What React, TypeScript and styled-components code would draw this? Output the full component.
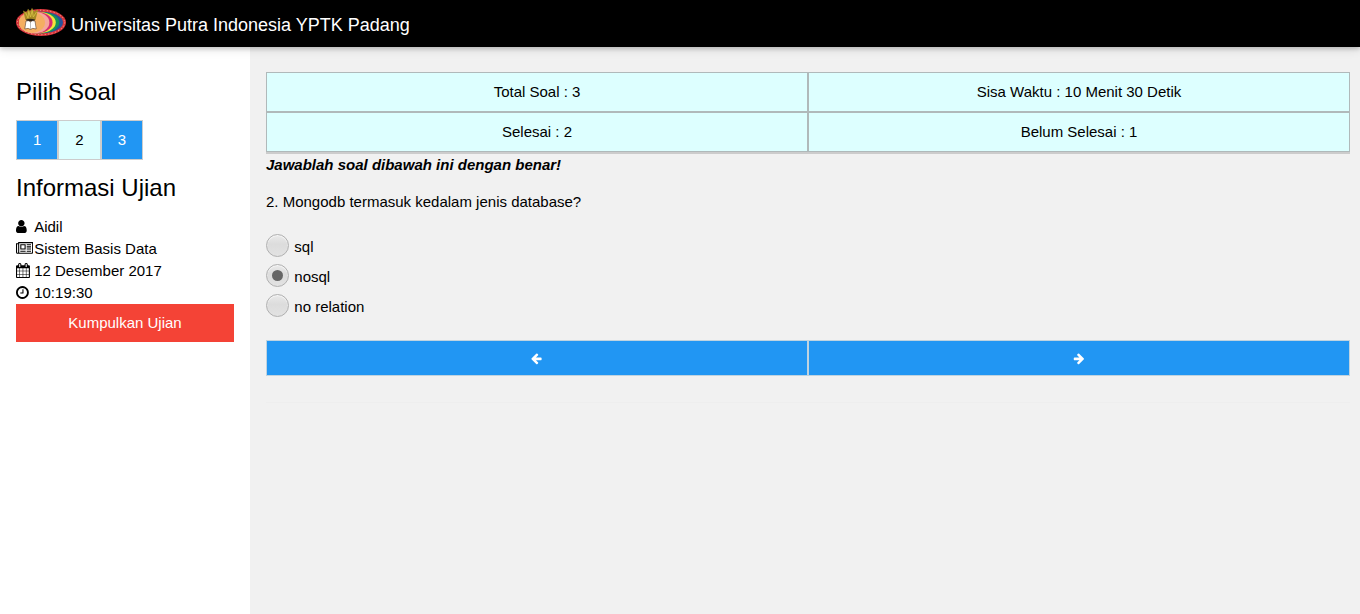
import React from 'react';
import styled, { createGlobalStyle, css } from 'styled-components';

const GlobalStyle = createGlobalStyle`
  *, *::before, *::after { box-sizing: border-box; }
  body {
    margin: 0;
    background: #f1f1f1;
    color: #000;
    font: 15px/22px "Liberation Sans", Arial, sans-serif;
  }
  #root { min-height: 100vh; }
`;

const Page = styled.div`
  display: flex;
  flex-direction: column;
  height: 100vh;
  overflow: hidden;
`;

const Header = styled.header`
  display: flex;
  flex: none;
  height: 47px;
  padding: 0 16px;
  background: #000;
  color: #fff;
  box-shadow: 0 2px 4px rgba(0, 0, 0, 0.16), 0 2px 10px rgba(0, 0, 0, 0.12);
  z-index: 1;
`;

const LogoImage = styled.svg`
  width: 50px;
  height: 30px;
  margin: 7px 5px 0 0;
`;

const Title = styled.span`
  font-size: 18px;
  line-height: 27px;
  padding-top: 12px;
`;

const Body = styled.div`
  display: flex;
  flex: 1;
`;

const Sidebar = styled.aside`
  width: 250px;
  flex: none;
  padding: 27px 16px;
  background: #fff;
`;

const Heading = styled.h3`
  margin: 0 0 10px;
  font-size: 24px;
  line-height: 36px;
  font-weight: 400;
`;

const QuestionPicker = styled.div`
  display: flex;
  margin-bottom: 10px;
`;

const filled = css`
  background: #2196f3;
  color: #fff;
`;

const QuestionButton = styled.button<{ $current?: boolean }>`
  width: 42.34px;
  height: 40px;
  padding: 0;
  border: 1px solid #ccc;
  font: inherit;
  ${(p) => (p.$current ? css`background: #ddffff; color: #000;` : filled)}
`;

const InfoRow = styled.div`
  display: flex;
  height: 22px;
`;

const InfoIcon = styled.svg`
  height: 15px;
  flex: none;
  margin-top: 3px;
  fill: currentColor;
`;

const IconSlot = styled.span`
  display: flex;
  width: 18.2px;
`;

const SubmitButton = styled.button`
  display: block;
  width: 100%;
  height: 38px;
  border: 0;
  padding: 0;
  background: #f44336;
  color: #fff;
  font: inherit;
`;

const Content = styled.main`
  flex: 1;
  padding: 25px 10px 0 16px;
`;

const StatusGrid = styled.div`
  display: grid;
  grid-template-columns: 1fr 1fr;
  border-bottom: 2px solid #ccc;
`;

const StatusCell = styled.div`
  height: 40px;
  padding-top: 8px;
  border: 1px solid #b0b9ba;
  background: #ddffff;
  text-align: center;
`;

const Instruction = styled.div`
  font-weight: 700;
  font-style: italic;
`;

const Question = styled.p`
  margin: 15px 0 20px;
`;

const Option = styled.label`
  display: flex;
  height: 30px;
  gap: 5.3px;
`;

const Radio = styled.span<{ $checked?: boolean }>`
  display: flex;
  align-items: center;
  justify-content: center;
  width: 23px;
  height: 23px;
  margin-top: 1px;
  border: 1px solid #b0b0b0;
  border-radius: 50%;
  background: linear-gradient(#e9e9e9, #dcdcdc 45%, #e2e2e2);
  box-shadow: inset 0 1px 1px #f7f7f7;
  ${(p) =>
    p.$checked &&
    css`
      &::after {
        content: '';
        width: 11px;
        height: 11px;
        border-radius: 50%;
        background: #666;
      }
    `}
`;

const OptionText = styled.span`
  padding-top: 3px;
`;

const NavRow = styled.nav`
  display: grid;
  grid-template-columns: 1fr 1fr;
  margin-top: 17px;
`;

const NavButton = styled.button`
  display: flex;
  align-items: center;
  justify-content: center;
  height: 36px;
  padding: 0;
  border: 1px solid #bfd3e0;
  ${filled}
`;

const ArrowIcon = styled.svg<{ $shift: number }>`
  width: 12.4px;
  height: 13px;
  margin-left: ${(p) => p.$shift}px;
  fill: currentColor;
`;

const Divider = styled.hr`
  margin: 26px 0 0;
  border: 0;
  border-top: 1px solid #eee;
`;

const userPath =
  'M1536 1399q0 109-62.5 187t-150.5 78h-854q-88 0-150.5-78t-62.5-187q0-85 8.5-160.5t31.5-152 58.5-131 94-89 134.5-34.5q131 128 313 128t313-128q76 0 134.5 34.5t94 89 58.5 131 31.5 152 8.5 160.5zm-256-887q0 159-112.5 271.5t-271.5 112.5-271.5-112.5-112.5-271.5 112.5-271.5 271.5-112.5 271.5 112.5 112.5 271.5z';
const newspaperPath =
  'M1024 512h-384v384h384v-384zm128 640v128h-640v-128h640zm0-768v640h-640v-640h640zm640 768v128h-512v-128h512zm0-256v128h-512v-128h512zm0-256v128h-512v-128h512zm0-256v128h-512v-128h512zm-1536 960v-960h-128v960q0 26 19 45t45 19 45-19 19-45zm1664 0v-1088h-1536v1088q0 33-11 64h1483q26 0 45-19t19-45zm128-1216v1216q0 80-56 136t-136 56h-1664q-80 0-136-56t-56-136v-1088h256v-128h1792z';
const calendarPath =
  'M192 1664h288v-288h-288v288zm352 0h320v-288h-320v288zm-352-352h288v-320h-288v320zm352 0h320v-320h-320v320zm-352-384h288v-288h-288v288zm736 736h320v-288h-320v288zm-384-736h320v-288h-320v288zm768 736h288v-288h-288v288zm-384-352h320v-320h-320v320zm-352-864v-288q0-13-9.5-22.5t-22.5-9.5h-64q-13 0-22.5 9.5t-9.5 22.5v288q0 13 9.5 22.5t22.5 9.5h64q13 0 22.5-9.5t9.5-22.5zm736 864h288v-320h-288v320zm-384-384h320v-288h-320v288zm384 0h288v-288h-288v288zm32-480v-288q0-13-9.5-22.5t-22.5-9.5h-64q-13 0-22.5 9.5t-9.5 22.5v288q0 13 9.5 22.5t22.5 9.5h64q13 0 22.5-9.5t9.5-22.5zm384-64v1280q0 52-38 90t-90 38h-1408q-52 0-90-38t-38-90v-1280q0-52 38-90t90-38h128v-96q0-66 47-113t113-47h64q66 0 113 47t47 113v96h384v-96q0-66 47-113t113-47h64q66 0 113 47t47 113v96h128q52 0 90 38t38 90z';
const clockPath =
  'M1024 544v448q0 14-9 23t-23 9h-320q-14 0-23-9t-9-23v-64q0-14 9-23t23-9h224v-352q0-14 9-23t23-9h64q14 0 23 9t9 23zm416 352q0-148-73-273t-198-198-273-73-273 73-198 198-73 273 73 273 198 198 273 73 273-73 198-198 73-273zm224 0q0 209-103 385.5t-279.5 279.5-385.5 103-385.5-103-279.5-279.5-103-385.5 103-385.5 279.5-279.5 385.5-103 385.5 103 279.5 279.5 103 385.5z';
const arrowPath =
  'M1536 896v128q0 53-32.5 90.5t-84.5 37.5h-704l293 294q38 36 38 90t-38 90l-75 76q-37 37-90 37-52 0-91-37l-651-652q-37-37-37-90 0-52 37-91l651-650q38-38 91-38 52 0 90 38l75 74q38 38 38 91t-38 91l-293 293h704q52 0 84.5 37.5t32.5 90.5z';

const info = [
  { path: userPath, viewBox: '256 0 1280 1792', text: 'Aidil' },
  { path: newspaperPath, viewBox: '0 0 2048 1792', text: 'Sistem Basis Data' },
  { path: calendarPath, viewBox: '64 0 1664 1792', text: '12 Desember 2017' },
  { path: clockPath, viewBox: '128 0 1536 1792', text: '10:19:30' },
];

const Logo = () => (
  <LogoImage viewBox="0 0 50 30">
    <ellipse cx="25" cy="15.5" rx="25" ry="13.4" fill="#d9353b" />
    <ellipse cx="25" cy="15.5" rx="23.6" ry="12.2" fill="none" stroke="#f3b5a5" strokeWidth=".9" strokeDasharray="1 2.4" />
    <ellipse cx="25" cy="15.5" rx="22" ry="10.8" fill="#28539b" />
    <ellipse cx="23.2" cy="15.5" rx="20.2" ry="10.8" fill="#16945a" />
    <ellipse cx="21.4" cy="15.5" rx="18.4" ry="10.8" fill="#f5e43b" />
    <ellipse cx="19.8" cy="15.5" rx="16.8" ry="10.8" fill="#d72c70" />
    <ellipse cx="18.2" cy="15.5" rx="15.2" ry="10.8" fill="#f5a79a" />
    <ellipse cx="16" cy="15.5" rx="13" ry="10.4" fill="#f4ae61" />
    <path d="M9.5 13 L7 3.5 L10.5 5.5 L12 1.8 L14.3 4.5 L16 0.8 L18 4.5 L22 2.5 L19.5 13 Z" fill="#a58b24" />
    <path d="M9.5 5.5 L12 11 L12.7 4.5 L14.5 10 L16.2 3.5 L17.3 10 L20.5 5" fill="none" stroke="#d5bd43" strokeWidth=".9" />
    <path d="M10 12.5 Q14.5 11 19 12.5 L18 14.5 H11 Z" fill="#30251b" />
    <path d="M10 14 Q13 13 14.5 15 Q16 13 19 14 L20.2 22 Q16 20.5 14.5 22.5 Q12.5 20.5 8.8 22 Z" fill="#fff" stroke="#36251d" strokeWidth=".5" />
    <path d="M14.5 15 V22" stroke="#777" strokeWidth=".5" />
  </LogoImage>
);

const options = ['sql', 'nosql', 'no relation'];
const statuses = ['Total Soal : 3', 'Sisa Waktu : 10 Menit 30 Detik', 'Selesai : 2', 'Belum Selesai : 1'];

export default function App() {
  return (
    <Page>
      <GlobalStyle />
      <Header>
        <Logo />
        <Title>Universitas Putra Indonesia YPTK Padang</Title>
      </Header>
      <Body>
        <Sidebar>
          <Heading>Pilih Soal</Heading>
          <QuestionPicker>
            {[1, 2, 3].map((n) => (
              <QuestionButton key={n} $current={n === 2}>{n}</QuestionButton>
            ))}
          </QuestionPicker>
          <Heading>Informasi Ujian</Heading>
          {info.map((item) => (
            <InfoRow key={item.text}>
              <IconSlot>
                <InfoIcon viewBox={item.viewBox}><path d={item.path} /></InfoIcon>
              </IconSlot>
              {item.text}
            </InfoRow>
          ))}
          <SubmitButton>Kumpulkan Ujian</SubmitButton>
        </Sidebar>
        <Content>
          <StatusGrid>
            {statuses.map((s) => <StatusCell key={s}>{s}</StatusCell>)}
          </StatusGrid>
          <Instruction>Jawablah soal dibawah ini dengan benar!</Instruction>
          <Question>2. Mongodb termasuk kedalam jenis database?</Question>
          {options.map((o) => (
            <Option key={o}>
              <Radio $checked={o === 'nosql'} />
              <OptionText>{o}</OptionText>
            </Option>
          ))}
          <NavRow>
            <NavButton aria-label="Sebelumnya">
              <ArrowIcon $shift={0} viewBox="0 0 1792 1792"><path d={arrowPath} /></ArrowIcon>
            </NavButton>
            <NavButton aria-label="Berikutnya">
              <ArrowIcon $shift={-2} viewBox="0 0 1792 1792">
                <path d={arrowPath} transform="matrix(-1 0 0 1 1792 0)" />
              </ArrowIcon>
            </NavButton>
          </NavRow>
          <Divider />
        </Content>
      </Body>
    </Page>
  );
}
